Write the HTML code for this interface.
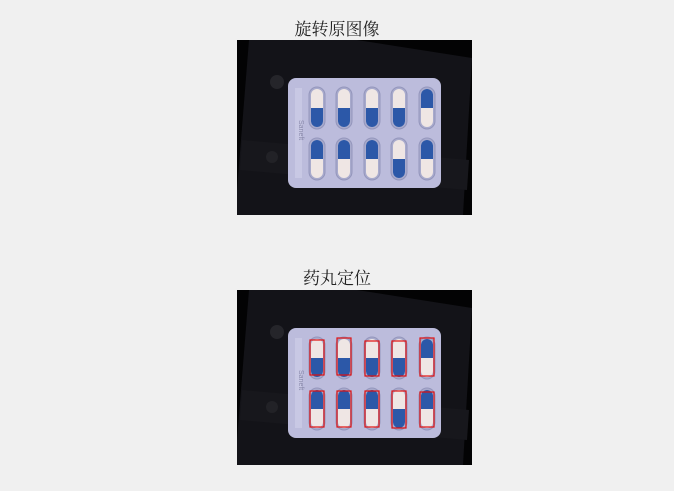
<!DOCTYPE html>
<html><head><meta charset="utf-8"><style>
html,body{margin:0;padding:0;background:#f0f0f0;width:674px;height:491px;overflow:hidden;position:relative}
.t{position:absolute;left:0;width:674px;text-align:center;font-family:"Liberation Serif","Noto Serif CJK SC",serif;font-size:17px;color:#222}
svg{position:absolute;left:237px}
</style></head><body>
<div class="t" style="top:15px">旋转原图像</div>
<div class="t" style="top:264px">药丸定位</div>
<svg width="674" height="0" style="position:absolute">
<defs>
<g id="pw"><rect x="-8" y="-21" width="16" height="42" rx="8" fill="#a8aacc" stroke="#9496bc" stroke-width="1"/><rect x="-6" y="-19" width="12" height="38" rx="6" fill="#efe6e4"/><path d="M-6 0H6V13A6 6 0 0 1 -6 13Z" fill="#2c58a8"/></g>
<g id="pb"><rect x="-8" y="-21" width="16" height="42" rx="8" fill="#a8aacc" stroke="#9496bc" stroke-width="1"/><rect x="-6" y="-19" width="12" height="38" rx="6" fill="#efe6e4"/><path d="M-6 0H6V-13A6 6 0 0 0 -6 -13Z" fill="#2c58a8"/></g>
<g id="img">
<rect width="235" height="175" fill="#030304"/>
<polygon points="12,0 120,0 235,18 226,175 0,175 0,150" fill="#131318"/>
<polygon points="5,100 232,120 230,150 3,130" fill="#17171c"/>
<circle cx="40" cy="42" r="7" fill="#25252a"/><circle cx="35" cy="117" r="6" fill="#222227"/>
<rect x="51" y="38" width="153" height="110" rx="8" fill="#bcbcdc"/>
<rect x="58" y="48" width="7" height="90" fill="#c8c8e4"/>
<text x="0" y="0" transform="translate(62,80) rotate(90)" font-family="Liberation Sans,sans-serif" font-size="7" fill="#8888aa">Saneft</text>
<use href="#pw" x="80" y="68"/><use href="#pw" x="107" y="68"/><use href="#pw" x="135" y="68"/><use href="#pw" x="162" y="68"/><use href="#pb" x="190" y="68"/>
<use href="#pb" x="80" y="119"/><use href="#pb" x="107" y="119"/><use href="#pb" x="135" y="119"/><use href="#pw" x="162" y="119"/><use href="#pb" x="190" y="119"/>
</g>
</defs></svg>
<svg width="235" height="175" style="top:40px"><use href="#img"/></svg>
<svg width="235" height="175" style="top:290px"><use href="#img"/>
<g fill="none" stroke="#e01010" stroke-width="1.2">
<rect x="73" y="50" width="14" height="35"/><rect x="100" y="48" width="14" height="37"/><rect x="128" y="51" width="14" height="35"/><rect x="155" y="51" width="14" height="35"/><rect x="183" y="48" width="14" height="38"/>
<rect x="73" y="101" width="14" height="36"/><rect x="100" y="101" width="14" height="36"/><rect x="128" y="101" width="14" height="36"/><rect x="155" y="101" width="14" height="37"/><rect x="183" y="102" width="14" height="35"/>
</g></svg>
</body></html>
